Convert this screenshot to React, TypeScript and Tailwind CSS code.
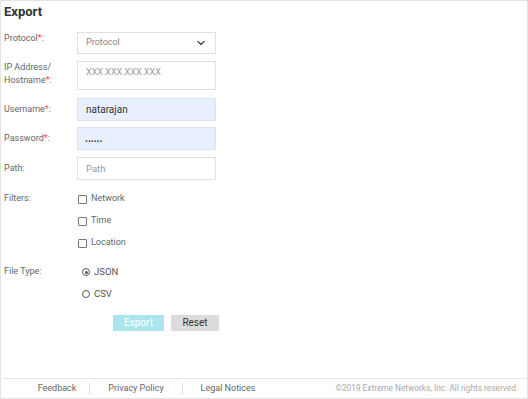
import { ChevronDown } from "lucide-react";

const Req = () => <span className="text-[#ee4b4b]">*</span>;

function Row({ label, children, top = "items-center", mt }: { label: React.ReactNode; children: React.ReactNode; top?: string; mt: string }) {
  return (
    <div className={`flex ${top} ${mt}`}>
      <div className="w-[73px] shrink-0 text-[9px] leading-[13px] text-[#666]">{label}</div>
      {children}
    </div>
  );
}

function Check({ text }: { text: string }) {
  return (
    <div className="flex h-[22px] items-center">
      <span className="ml-[1px] h-[9px] w-[9px] rounded-[1px] border border-[#777] bg-white" />
      <span className="ml-[4px] text-[9px] text-[#666]">{text}</span>
    </div>
  );
}

function Radio({ text, checked }: { text: string; checked?: boolean }) {
  return (
    <div className="flex h-[22px] items-center">
      <span className="ml-[5px] flex h-[8px] w-[8px] items-center justify-center rounded-full border-[1.5px] border-[#555]">
        {checked && <span className="h-[3px] w-[3px] rounded-full bg-[#555]" />}
      </span>
      <span className="ml-[4px] text-[9.5px] text-[#555]">{text}</span>
    </div>
  );
}

export default function App() {
  return (
    <div
      className="flex h-[399px] w-[528px] flex-col border border-[#e4e4e4] bg-white"
      style={{ fontFamily: "Roboto, 'Liberation Sans', sans-serif" }}
    >
      <div className="flex-1 px-[3px]">
        <h1 className="pt-[3px] text-[13px] font-bold leading-[16px] text-[#333]">Export</h1>

        <Row label={<>Protocol<Req />:</>} top="items-start" mt="mt-[12px]">
          <div className="flex h-[22px] w-[139px] items-center justify-between border border-[#e0e0e0] pl-[8px] pr-[8px] text-[9px] text-[#888]">
            <span>Protocol</span>
            <ChevronDown size={12} strokeWidth={3} className="text-[#555]" />
          </div>
        </Row>

        <Row label={<><div>IP Address/</div><div>Hostname<Req />:</div></>} top="items-start" mt="mt-[7px]">
          <textarea
            readOnly
            placeholder="XXX.XXX.XXX.XXX"
            className="h-[29px] w-[139px] resize-none border border-[#e0e0e0] px-[8px] pt-[4px] text-[9px] leading-[13px] outline-none placeholder:text-[#999]"
          />
        </Row>

        <Row label={<>Username<Req />:</>} mt="mt-[8px]">
          <input
            readOnly
            value="natarajan"
            className="h-[23px] w-[139px] border border-[#dbe2ec] bg-[#e8f0fe] px-[8px] text-[10px] text-[#333] outline-none"
          />
        </Row>

        <Row label={<>Password<Req />:</>} mt="mt-[6px]">
          <div className="flex h-[23px] w-[139px] items-center border border-[#dbe2ec] bg-[#e8f0fe] px-[7px] text-[10px] font-bold leading-none text-[#333]">
            ......
          </div>
        </Row>

        <Row label="Path:" mt="mt-[7px]">
          <input
            readOnly
            placeholder="Path"
            className="h-[23px] w-[139px] border border-[#e0e0e0] px-[8px] text-[9.5px] outline-none placeholder:text-[#999]"
          />
        </Row>

        <Row label={<div className="pt-[4px]">Filters:</div>} top="items-start" mt="mt-[8px]">
          <div className="flex flex-col">
            <Check text="Network" />
            <Check text="Time" />
            <Check text="Location" />
          </div>
        </Row>

        <Row label={<div className="pt-[4px]">File Type:</div>} top="items-start" mt="mt-[7px]">
          <div className="flex flex-col">
            <Radio text="JSON" checked />
            <Radio text="CSV" />
          </div>
        </Row>

        <div className="ml-[109px] mt-[10px] flex gap-[7px]">
          <button className="h-[16px] w-[51px] bg-[#a9e6ee] text-[10px] leading-[16px] text-white">Export</button>
          <button className="h-[16px] w-[48px] bg-[#dcdcdc] text-[10px] leading-[16px] text-[#333]">Reset</button>
        </div>
      </div>

      <footer className="ml-[2px] flex h-[20px] items-center border-t border-[#e6e6e6] pl-[22px] pr-[9px] text-[9px] text-[#666]">
        <span className="w-[64px] text-center">Feedback</span>
        <span className="h-[12px] border-l border-[#ddd]" />
        <span className="w-[92px] text-center">Privacy Policy</span>
        <span className="h-[12px] border-l border-[#ddd]" />
        <span className="w-[90px] text-center">Legal Notices</span>
        <span className="ml-auto text-[8.3px] text-[#aaa]">©2019 Extreme Networks, Inc. All rights reserved.</span>
      </footer>
    </div>
  );
}
